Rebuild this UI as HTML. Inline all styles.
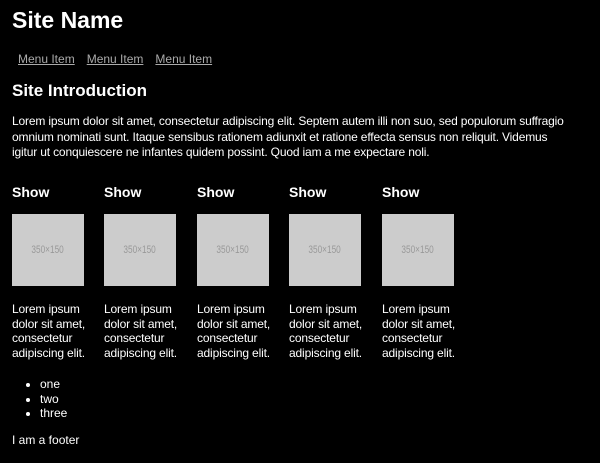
<!DOCTYPE html>
<html><head><style>
body{margin:0;background:#000;color:#fff;font-family:"Liberation Sans",sans-serif;width:600px;height:463px;overflow:hidden;position:relative}
.a{position:absolute;white-space:nowrap}
h1{font-size:23px;font-weight:bold;margin:0}
.m a{color:#aaa;text-decoration:underline;font-size:12px;margin-right:12px}
.p{font-size:12px;line-height:15.5px;letter-spacing:-0.16px}
.col{position:absolute;top:184px;width:90px}
.col b{display:block;font-size:14px;height:30px}
.img{width:72px;height:72px;background:#ccc;color:#999;font-size:11px;text-align:center;line-height:72px;font-family:"Liberation Sans Narrow","Liberation Sans",sans-serif}
.img span{display:inline-block;transform:scaleX(0.75)}
.col p{margin:16px 0 0;font-size:12px;line-height:14.5px;letter-spacing:-0.15px}
ul{position:absolute;left:22px;top:377px;margin:0;padding-left:18px;font-size:12px;line-height:14.5px}
</style></head><body>
<h1 class="a" style="left:12px;top:7px">Site Name</h1>
<div class="a m" style="left:18px;top:50px"><a>Menu Item</a><a>Menu Item</a><a>Menu Item</a></div>
<div class="a" style="left:12px;top:81px;font-size:17px;font-weight:bold">Site Introduction</div>
<div class="a p" style="left:12px;top:114px">Lorem ipsum dolor sit amet, consectetur adipiscing elit. Septem autem illi non suo, sed populorum suffragio<br>omnium nominati sunt. Itaque sensibus rationem adiunxit et ratione effecta sensus non reliquit. Videmus<br>igitur ut conquiescere ne infantes quidem possint. Quod iam a me expectare noli.</div>
<div class="col" style="left:12px"><b>Show</b><div class="img"><span>350×150</span></div><p>Lorem ipsum<br>dolor sit amet,<br>consectetur<br>adipiscing elit.</p></div>
<div class="col" style="left:104px"><b>Show</b><div class="img"><span>350×150</span></div><p>Lorem ipsum<br>dolor sit amet,<br>consectetur<br>adipiscing elit.</p></div>
<div class="col" style="left:197px"><b>Show</b><div class="img"><span>350×150</span></div><p>Lorem ipsum<br>dolor sit amet,<br>consectetur<br>adipiscing elit.</p></div>
<div class="col" style="left:289px"><b>Show</b><div class="img"><span>350×150</span></div><p>Lorem ipsum<br>dolor sit amet,<br>consectetur<br>adipiscing elit.</p></div>
<div class="col" style="left:382px"><b>Show</b><div class="img"><span>350×150</span></div><p>Lorem ipsum<br>dolor sit amet,<br>consectetur<br>adipiscing elit.</p></div>
<ul><li>one</li><li>two</li><li>three</li></ul>
<div class="a" style="left:12px;top:433px;font-size:12px">I am a footer</div>
</body></html>
